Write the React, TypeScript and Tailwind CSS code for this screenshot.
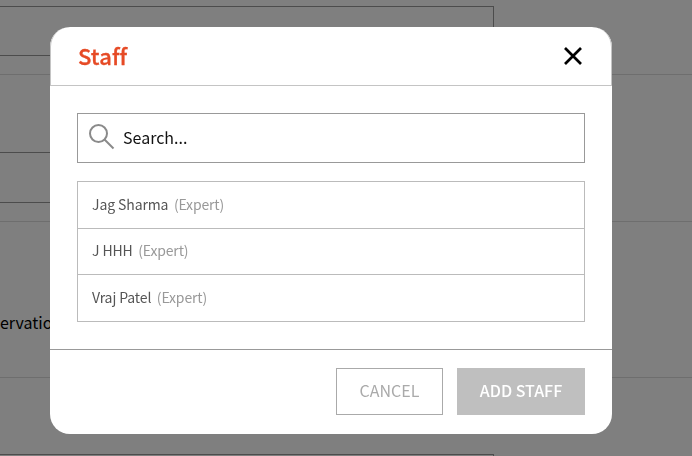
import React from 'react'

const fontFamily = "font-['Noto_Sans_CJK_KR','Noto_Sans',sans-serif]"

const staff = [
    { name: 'Jag Sharma', role: '(Expert)', row: 'h-[47px] pb-[2px] border-b border-[#bbbbbb]' },
    { name: 'J HHH', role: '(Expert)', row: 'h-[46px] pb-[3px] border-b border-[#bbbbbb]' },
    { name: 'Vraj Patel', role: '(Expert)', row: 'h-[46px] pb-[2px]' },
]

const Page = () => (
    <div className="w-[692px] h-[456px] overflow-hidden bg-white pt-[6px]">
        <div className="border-b border-[#dddddd] pb-[18px]">
            <div className="w-[494px] h-[50px] border border-l-0 border-[#999999]" />
        </div>
        <div className="border-b border-[#dddddd] pt-[77px] pb-[18px]">
            <div className="w-[494px] h-[51px] border border-l-0 border-[#999999]" />
        </div>
        <div className="border-b border-[#dddddd] h-[156px] pt-[88px] text-[16px] leading-[24px] text-black whitespace-nowrap">
            ervation
        </div>
        <div className="pt-[76px]">
            <div className="w-[494px] h-[50px] border border-l-0 border-[#999999]" />
        </div>
    </div>
)

const App = () => {
    return (
        <div className={`relative w-[692px] h-[456px] overflow-hidden ${fontFamily}`}>
            <Page />
            <div className="absolute inset-0 bg-black/50" />
            <div className="absolute left-[50px] top-[27px] w-[562px] h-[407px] bg-white rounded-[20px] flex flex-col [will-change:transform]">
                <div className="h-[59px] shrink-0 flex items-center justify-between pl-[27px] pr-[28px] border-x border-b border-[#c4c4c4] rounded-t-[20px]">
                    <span className="pb-[2px] text-[22px] leading-[30px] font-medium tracking-[0.1px] text-[#e64a25] [-webkit-text-stroke:0.3px_#e64a25]">Staff</span>
                    <svg className="w-[20px] h-[20px]" viewBox="0 0 20 20" fill="none" stroke="#000000" strokeWidth={2.7}>
                        <path d="M2 2 L18 18 M18 2 L2 18" />
                    </svg>
                </div>
                <div className="flex-1 px-[27px] pt-[27px]">
                    <div className="h-[50px] border border-[#999999] flex items-center pl-[11px]">
                        <svg className="w-[26px] h-[26px] mb-[2px] shrink-0" viewBox="0 0 26 26" fill="none" stroke="#8a8a8a" strokeWidth={2}>
                            <circle cx="9.5" cy="9.5" r="8.5" />
                            <path d="M15.5 15.5 L24.5 24.5" />
                        </svg>
                        <span className="ml-[8px] pb-[2px] text-[16px] leading-[24px] text-[#111111]">Search...</span>
                    </div>
                    <div className="mt-[18px] h-[141px] border border-[#bbbbbb] flex flex-col">
                        {staff.map((item) => (
                            <div
                                key={item.name}
                                className={`flex items-center pl-[14px] text-[14px] leading-[20px] tracking-[-0.1px] ${item.row}`}
                            >
                                <span className="text-[#555555]">{item.name}</span>
                                <span className="ml-[5.5px] tracking-[-0.15px] text-[#999999]">{item.role}</span>
                            </div>
                        ))}
                    </div>
                </div>
                <div className="h-[85px] shrink-0 border-t border-[#999999] flex justify-end gap-[14px] pt-[18px] pr-[27px]">
                    <button type="button" className="w-[107px] h-[47px] pb-[3px] border border-[#aaaaaa] text-[16px] text-[#aaaaaa]">
                        CANCEL
                    </button>
                    <button type="button" className="w-[128px] h-[47px] pb-[3px] bg-[#bfbfbf] text-[16px] font-medium text-white">
                        ADD STAFF
                    </button>
                </div>
            </div>
        </div>
    )
}

export default App
